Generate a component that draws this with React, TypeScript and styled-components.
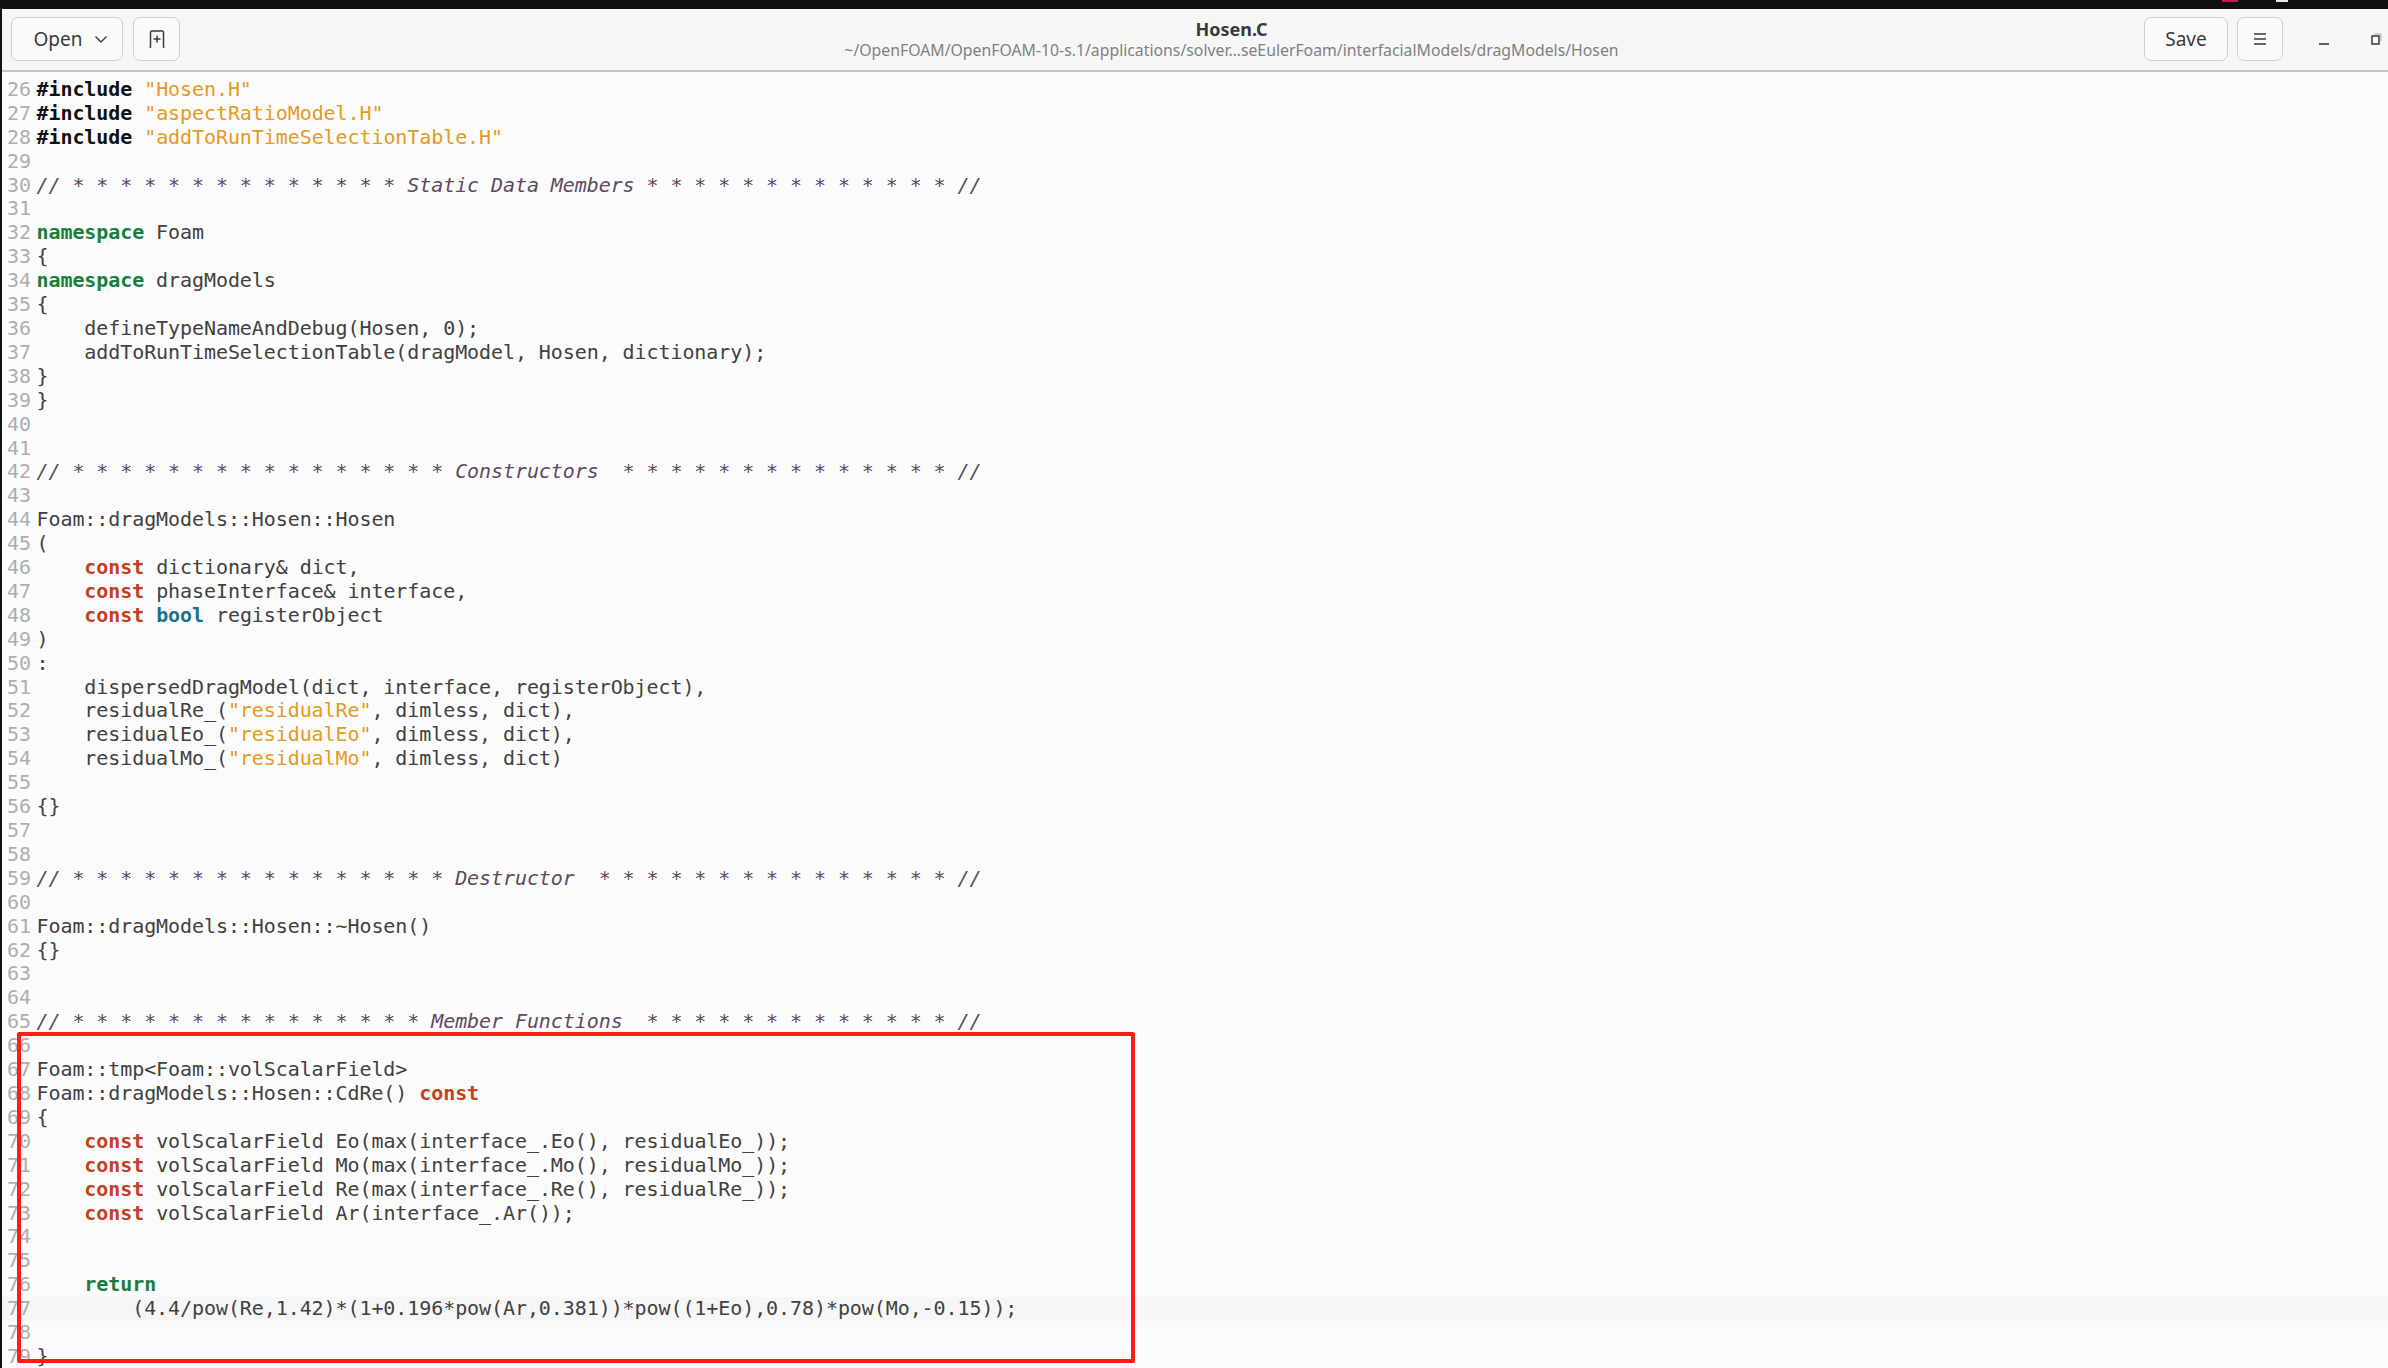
import React from "react";
import styled, { createGlobalStyle } from "styled-components";

const Global = createGlobalStyle`
  html, body { margin: 0; padding: 0; background: #111214; }
  #root { width: 2388px; height: 1368px; overflow: hidden; }
`;

const Screen = styled.div`
  position: relative;
  width: 2388px;
  height: 1368px;
  display: flex;
  flex-direction: column;
  background: #111214;
  overflow: hidden;
`;

const TopPanel = styled.div`
  position: relative;
  height: 9px;
  flex: none;
  background: #0f1012;
`;

const TrayDot = styled.span<{ $x: number; $c: string; $w: number }>`
  position: absolute;
  top: 0;
  left: ${(p) => p.$x}px;
  width: ${(p) => p.$w}px;
  height: 2px;
  background: ${(p) => p.$c};
`;

const Window = styled.div`
  flex: 1;
  min-height: 0;
  margin-left: 2px;
  display: flex;
  flex-direction: column;
  background: #fbfbfb;
`;

const Header = styled.header`
  position: relative;
  flex: none;
  height: 63px;
  box-sizing: border-box;
  display: flex;
  align-items: center;
  justify-content: space-between;
  padding: 0 0 2px 9px;
  background: #f6f6f6;
  border-bottom: 2px solid #c6c6c6;
  font-family: "Noto Sans", "Open Sans", sans-serif;
`;

const Group = styled.div<{ $gap: number }>`
  display: flex;
  align-items: center;
  gap: ${(p) => p.$gap}px;
`;

const HeadButton = styled.div<{ $w: number }>`
  width: ${(p) => p.$w}px;
  height: 44px;
  box-sizing: border-box;
  display: flex;
  align-items: center;
  justify-content: center;
  gap: 12px;
  border: 1.5px solid #d0d0d0;
  border-radius: 7px;
  background: #fafafa;
  color: #3a3a3a;
  font-size: 19px;
`;

const OpenButton = styled(HeadButton)`
  padding-left: 8px;
`;

const Title = styled.div`
  position: absolute;
  left: 0;
  right: 0;
  top: 10px;
  padding-left: 73px;
  text-align: center;
  line-height: 21px;
  pointer-events: none;
`;

const TitleMain = styled.div`
  font-size: 18px;
  font-weight: 700;
  color: #3a3a3a;
`;

const TitleSub = styled.div`
  font-size: 15.8px;
  color: #808080;
`;

const WinControl = styled.div`
  width: 24px;
  margin-left: 19.5px;
  display: flex;
  justify-content: center;
  color: #3a3a3a;
`;

const Editor = styled.main`
  flex: 1;
  min-height: 0;
  overflow: hidden;
  font-family: "DejaVu Sans Mono", monospace;
  font-size: 20px;
  letter-spacing: -0.08px;
`;

const Lines = styled.div`
  margin-top: -18px;
`;

const Row = styled.div<{ $current?: boolean }>`
  display: flex;
  height: 23.92px;
  line-height: 23.92px;
  white-space: pre;
  background: ${(p) => (p.$current ? "#f6f6f6" : "transparent")};
`;

const LineNo = styled.span`
  flex: none;
  width: 34.5px;
  box-sizing: border-box;
  padding-left: 5px;
  color: #aeaeae;
`;

const Code = styled.span`
  color: #414141;
`;

const Tok = styled.span<{ $k: string }>`
  ${(p) =>
    p.$k === "inc"
      ? "color:#111;font-weight:700;"
      : p.$k === "str"
      ? "color:#e59a24;"
      : p.$k === "com"
      ? "color:#5f4a62;font-style:italic;"
      : p.$k === "ns"
      ? "color:#1a7d3c;font-weight:700;"
      : p.$k === "kw"
      ? "color:#c4401f;font-weight:700;"
      : p.$k === "ty"
      ? "color:#1b6f8a;font-weight:700;"
      : ""}
`;

const Marker = styled.div`
  position: absolute;
  left: 17px;
  top: 1032px;
  width: 1118px;
  height: 331px;
  box-sizing: border-box;
  border: 4px solid #fa1e14;
  border-radius: 2px;
`;

type T = [string, string];
const p = (s: string): T => ["", s];
const k = (s: string): T => ["kw", s];
const st = (s: string): T => ["str", s];
const c = (s: string): T => ["com", s];
const inc = (s: string): T => ["inc", s];
const ns = (s: string): T => ["ns", s];

const stars = (n: number) => Array(n).fill("*").join(" ");

const rows: Record<number, T[]> = {
  26: [inc("#include"), p(" "), st('"Hosen.H"')],
  27: [inc("#include"), p(" "), st('"aspectRatioModel.H"')],
  28: [inc("#include"), p(" "), st('"addToRunTimeSelectionTable.H"')],
  30: [c(`// ${stars(14)} Static Data Members ${stars(13)} //`)],
  32: [ns("namespace"), p(" Foam")],
  33: [p("{")],
  34: [ns("namespace"), p(" dragModels")],
  35: [p("{")],
  36: [p("    defineTypeNameAndDebug(Hosen, 0);")],
  37: [p("    addToRunTimeSelectionTable(dragModel, Hosen, dictionary);")],
  38: [p("}")],
  39: [p("}")],
  42: [c(`// ${stars(16)} Constructors  ${stars(14)} //`)],
  44: [p("Foam::dragModels::Hosen::Hosen")],
  45: [p("(")],
  46: [p("    "), k("const"), p(" dictionary& dict,")],
  47: [p("    "), k("const"), p(" phaseInterface& interface,")],
  48: [p("    "), k("const"), p(" "), ["ty", "bool"], p(" registerObject")],
  49: [p(")")],
  50: [p(":")],
  51: [p("    dispersedDragModel(dict, interface, registerObject),")],
  52: [p("    residualRe_("), st('"residualRe"'), p(", dimless, dict),")],
  53: [p("    residualEo_("), st('"residualEo"'), p(", dimless, dict),")],
  54: [p("    residualMo_("), st('"residualMo"'), p(", dimless, dict)")],
  56: [p("{}")],
  59: [c(`// ${stars(16)} Destructor  ${stars(15)} //`)],
  61: [p("Foam::dragModels::Hosen::~Hosen()")],
  62: [p("{}")],
  65: [c(`// ${stars(15)} Member Functions  ${stars(13)} //`)],
  67: [p("Foam::tmp<Foam::volScalarField>")],
  68: [p("Foam::dragModels::Hosen::CdRe() "), k("const")],
  69: [p("{")],
  70: [p("    "), k("const"), p(" volScalarField Eo(max(interface_.Eo(), residualEo_));")],
  71: [p("    "), k("const"), p(" volScalarField Mo(max(interface_.Mo(), residualMo_));")],
  72: [p("    "), k("const"), p(" volScalarField Re(max(interface_.Re(), residualRe_));")],
  73: [p("    "), k("const"), p(" volScalarField Ar(interface_.Ar());")],
  76: [p("    "), ns("return")],
  77: [p("        (4.4/pow(Re,1.42)*(1+0.196*pow(Ar,0.381))*pow((1+Eo),0.78)*pow(Mo,-0.15));")],
  79: [p("}")],
};

const numbers = Array.from({ length: 56 }, (_, i) => i + 25);

export default function App() {
  return (
    <Screen>
      <Global />
      <TopPanel>
        <TrayDot $x={2222} $c="#c2185b" $w={16} />
        <TrayDot $x={2276} $c="#e8e8e8" $w={12} />
      </TopPanel>
      <Window>
        <Header>
          <Group $gap={10}>
            <OpenButton $w={112}>
              Open
              <svg width="14" height="14" viewBox="0 0 14 14" fill="none" stroke="#3a3a3a" strokeWidth="1.4">
                <path d="M1.5 4.5 7 10l5.5-5.5" />
              </svg>
            </OpenButton>
            <HeadButton $w={47}>
              <svg width="20" height="20" viewBox="0 0 20 20" fill="none" stroke="#3a3a3a" strokeWidth="1.5">
                <path d="M2.5 18h1V3.5a1.5 1.5 0 0 1 1.5-1.5h10a1.5 1.5 0 0 1 1.5 1.5V18h1" />
                <path d="M10 6.5v7M6.5 10h7" />
              </svg>
            </HeadButton>
          </Group>
          <Title>
            <TitleMain>Hosen.C</TitleMain>
            <TitleSub>~/OpenFOAM/OpenFOAM-10-s.1/applications/solver…seEulerFoam/interfacialModels/dragModels/Hosen</TitleSub>
          </Title>
          <Group $gap={9}>
            <HeadButton $w={84}>Save</HeadButton>
            <HeadButton $w={46}>
              <svg width="16" height="16" viewBox="0 0 16 16" stroke="#3a3a3a" strokeWidth="1.6">
                <path d="M2 3h12M2 8h12M2 13h12" />
              </svg>
            </HeadButton>
            <WinControl>
              <svg width="14" height="14" viewBox="0 0 14 14" stroke="#3a3a3a" strokeWidth="1.6">
                <path d="M2 12h10" />
              </svg>
            </WinControl>
            <WinControl>
              <svg width="14" height="14" viewBox="0 0 14 14" fill="none" stroke="#3a3a3a" strokeWidth="1.5">
                <rect x="3" y="4" width="7" height="8" />
                <path d="M5 2h7v7" stroke="#aaa" strokeWidth="1" />
              </svg>
            </WinControl>
          </Group>
        </Header>
        <Editor>
          <Lines>
            {numbers.map((n) => (
              <Row key={n} $current={n === 77}>
                <LineNo>{n}</LineNo>
                <Code>
                  {(rows[n] || []).map(([kind, text], i) => (
                    <Tok key={i} $k={kind}>
                      {text}
                    </Tok>
                  ))}
                </Code>
              </Row>
            ))}
          </Lines>
        </Editor>
      </Window>
      <Marker />
    </Screen>
  );
}
